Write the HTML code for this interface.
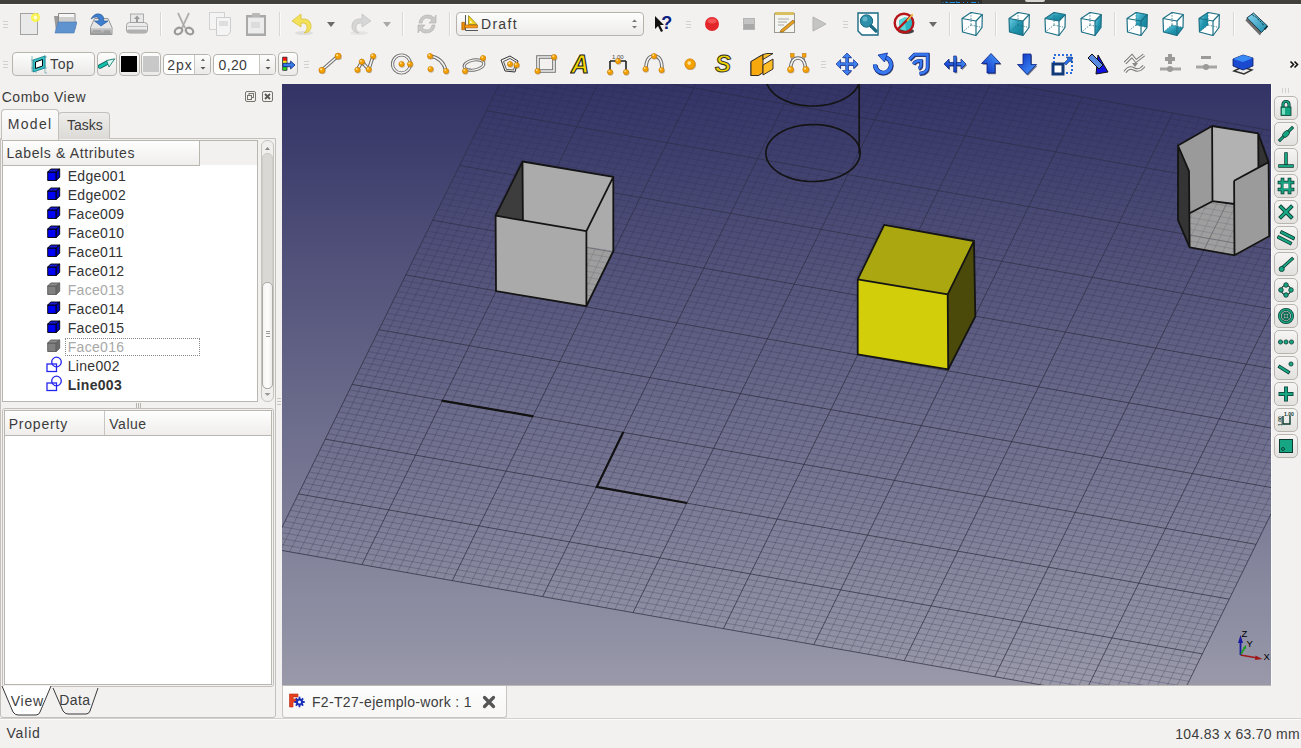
<!DOCTYPE html><html><head><meta charset="utf-8"><style>
*{margin:0;padding:0;box-sizing:border-box}
html,body{width:1301px;height:748px;overflow:hidden;background:#f2f1f0;font-family:"Liberation Sans",sans-serif;color:#3c3c3c}
.a{position:absolute}
.t{position:absolute;white-space:nowrap;line-height:1}
.grip{position:absolute;width:5px;height:8px;border-top:1px solid #cfcdc9;border-bottom:1px solid #cfcdc9}
.grip:after{content:"";position:absolute;left:0;right:0;top:2px;height:2px;border-top:1px solid #cfcdc9}
.sep{position:absolute;width:1px;background:#d8d6d2}
.btn{position:absolute;border:1px solid #b8b5af;border-radius:4px;background:linear-gradient(#fdfdfd,#ebeae8)}
</style></head><body>
<div class="a" style="left:0;top:0;width:1301px;height:4px;background:#42403b"></div>
<div class="a" style="left:0;top:4px;width:1301px;height:1px;background:#fbfbfa"></div>
<div class="a" style="left:941px;top:0;width:41px;height:4px;background:#2e2d2a"></div>
<svg class="a" style="left:941px;top:0" width="41" height="4"><path d="M1.5 2.5H2.5M5 1.5V2.5H7M8.5 2.5H14M15.5 1.5V2.5H19M22 2.5H23M26 2.5H27M30 2.5H35M37 2.5H38" stroke="#1e90e8" stroke-width="1.2"/></svg>
<div class="a" style="left:1025px;top:0;width:20px;height:2px;background:#d8d6d2;border-radius:0 0 3px 3px"></div>
<svg class="a" style="left:3px;top:21px" width="6" height="8"><path d="M0 0.5H5M0 3.5H5M0 6.5H5" stroke="#d3d1cd" stroke-width="1"/></svg>
<svg class="a" style="left:17.0px;top:12.0px" width="24" height="24" viewBox="0 0 24 24"><rect x="3.5" y="1.5" width="17" height="21" fill="#f0f0f0" stroke="#a2a2a2"/><rect x="4" y="2" width="16" height="20" fill="url(#none)" opacity="0"/><rect x="4" y="2" width="16" height="20" fill="#e9e9e9"/><circle cx="18.5" cy="5.5" r="4.6" fill="#fbf53a" opacity="0.85"/><circle cx="18.5" cy="5.5" r="2" fill="#ffffd0"/></svg>
<svg class="a" style="left:53.0px;top:12.0px" width="24" height="24" viewBox="0 0 24 24"><path d="M1 4H6L7 3H11V19H3Z" fill="#9b9b9b"/><path d="M5.5 1.5H22V17H5.5Z" fill="#f6f6f6" stroke="#8a8a8a"/><path d="M6 5H21V10H6Z" fill="#cfcfcf"/><path d="M2 21L5 10H24L21 21Z" fill="#5f93cf" stroke="#4a78b0" stroke-width="0.6"/></svg>
<svg class="a" style="left:89.0px;top:12.0px" width="24" height="24" viewBox="0 0 24 24"><defs><linearGradient id="sv" x1="0" y1="0" x2="0" y2="1"><stop offset="0" stop-color="#d0d0d0"/><stop offset="1" stop-color="#9c9c9c"/></linearGradient></defs><path d="M1.5 15.5L5.5 6.5H19L23 15.5V22.5H1.5Z" fill="#e6e6e6" stroke="#8c8c8c" stroke-width="0.9"/><path d="M2 16H22.5V22H2Z" fill="url(#sv)"/><path d="M4 19H12M16 18V21M18 18V21M20 18V21" stroke="#8a8a8a" stroke-width="0.8"/><path d="M2 7Q6 0 12 2.5Q15.5 4.5 14.5 9H19L12 14L5.5 9H10Q10.5 6 8 5Q5 4.5 2 7Z" fill="#3f7fd0" stroke="#285a9c" stroke-width="0.7"/></svg>
<svg class="a" style="left:125.0px;top:12.0px" width="24" height="24" viewBox="0 0 24 24"><rect x="5.5" y="2" width="13" height="10" fill="#e8e8e8" stroke="#a5a5a5" stroke-width="0.9"/><path d="M12 3.5L15 7H13V10H11V7H9Z" fill="#9a9a9a"/><rect x="1.5" y="10.5" width="21" height="10.5" rx="3" fill="#ececec" stroke="#9a9a9a" stroke-width="0.9"/><path d="M2.5 14.5H21.5" stroke="#bdbdbd"/><rect x="2" y="17.5" width="20" height="3.5" rx="1.5" fill="#b0b0b0"/></svg>
<div class="a" style="left:160px;top:12px;width:1px;height:24px;background:#d9d7d3"></div><div class="a" style="left:161px;top:12px;width:1px;height:24px;background:#fbfbfa"></div>
<svg class="a" style="left:172.0px;top:12.0px" width="24" height="24" viewBox="0 0 24 24"><path d="M6 1L13 16M17 1L10 16" stroke="#c8c8c8" stroke-width="2.2"/><path d="M6 1L13 16M17 1L10 16" stroke="#9a9a9a" stroke-width="0.8" fill="none"/><ellipse cx="6.5" cy="19" rx="4" ry="3" fill="none" stroke="#9a9a9a" stroke-width="2.2" transform="rotate(-30 6.5 19)"/><ellipse cx="17.5" cy="19" rx="4" ry="3" fill="none" stroke="#9a9a9a" stroke-width="2.2" transform="rotate(30 17.5 19)"/></svg>
<svg class="a" style="left:208.0px;top:12.0px" width="24" height="24" viewBox="0 0 24 24"><rect x="1.5" y="0.5" width="15" height="17" fill="#f4f4f4" stroke="#d2d2d2"/><path d="M8.5 5.5H22.5V20L19.5 23.5H8.5Z" fill="#f4f4f4" stroke="#cdcdcd"/><rect x="11" y="9" width="9" height="5" fill="#dedede"/></svg>
<svg class="a" style="left:244.0px;top:12.0px" width="24" height="24" viewBox="0 0 24 24"><rect x="2" y="3" width="20" height="21" fill="#a9a9a9"/><rect x="4" y="5.5" width="16" height="16" fill="#ececec"/><rect x="8" y="1" width="8" height="4" rx="1" fill="#b8b8b8"/><rect x="7" y="10" width="9" height="6" fill="#dcdcdc"/></svg>
<div class="a" style="left:279px;top:12px;width:1px;height:24px;background:#d9d7d3"></div><div class="a" style="left:280px;top:12px;width:1px;height:24px;background:#fbfbfa"></div>
<svg class="a" style="left:290.5px;top:12.0px" width="24" height="24" viewBox="0 0 24 24"><ellipse cx="13" cy="21" rx="9" ry="2" fill="#000" opacity="0.08"/><path d="M10 2L1 9L10 15V11Q17 10 16 17Q15 20 13 21Q21 20 20 13Q19 6 10 7Z" fill="#f4e15a" stroke="#d8c23a" stroke-width="0.8"/></svg>
<svg class="a" style="left:325.0px;top:19.0px" width="12" height="12" viewBox="0 0 12 12"><path d="M2 3H10L6 8Z" fill="#6b6b6b"/></svg>
<svg class="a" style="left:347.5px;top:12.0px" width="24" height="24" viewBox="0 0 24 24"><ellipse cx="11" cy="21" rx="9" ry="2" fill="#000" opacity="0.05"/><path d="M14 2L23 9L14 15V11Q7 10 8 17Q9 20 11 21Q3 20 4 13Q5 6 14 7Z" fill="#d6d6d6" stroke="#c4c4c4" stroke-width="0.8"/></svg>
<svg class="a" style="left:381.0px;top:19.0px" width="12" height="12" viewBox="0 0 12 12"><path d="M2 3H10L6 8Z" fill="#a8a8a8"/></svg>
<div class="a" style="left:402px;top:12px;width:1px;height:24px;background:#d9d7d3"></div><div class="a" style="left:403px;top:12px;width:1px;height:24px;background:#fbfbfa"></div>
<svg class="a" style="left:414.5px;top:12.0px" width="24" height="24" viewBox="0 0 24 24"><path d="M4 11Q5 3 13 3Q17 3 19 6L21 3V11H14L17 8Q15 6 12 6Q8 6 7 11Z" fill="#c9c9c9" stroke="#b0b0b0" stroke-width="0.6"/><path d="M20 13Q19 21 11 21Q7 21 5 18L3 21V13H10L7 16Q9 18 12 18Q16 18 17 13Z" fill="#c9c9c9" stroke="#b0b0b0" stroke-width="0.6"/></svg>
<div class="a" style="left:449px;top:12px;width:1px;height:24px;background:#d9d7d3"></div><div class="a" style="left:450px;top:12px;width:1px;height:24px;background:#fbfbfa"></div>
<div class="a" style="left:456px;top:12px;width:188px;height:24px;border:1px solid #b6b3ad;border-radius:4px;background:linear-gradient(#fefefe,#ecebe9)"></div>
<svg class="a" style="left:459.0px;top:14.0px" width="20" height="20" viewBox="0 0 20 20"><path d="M6.5 1V16.5H19" fill="none" stroke="#555" stroke-width="1"/><path d="M9.5 1.5V10.5H18Z" fill="#f2d41e" stroke="#8a7a10" stroke-width="0.7"/><path d="M11 6V9H13.5Z" fill="#fff8c0"/><path d="M2.8 8.3H5.6V15.7H2.8Z" fill="#f08a00" stroke="#9a5500" stroke-width="0.6"/><path d="M5.6 11H18.5V13.8H5.6Z" fill="#ff9a10" stroke="#9a5500" stroke-width="0.6"/></svg>
<div class="t" style="left:481px;top:17.1px;font-size:14px;letter-spacing:1.3px;color:#3c3c3c">Draft</div>
<svg class="a" style="left:629.5px;top:18.0px" width="9" height="12" viewBox="0 0 9 12"><path d="M2 4L4.5 1.5L7 4Z" fill="#777"/><path d="M2 8L4.5 10.5L7 8Z" fill="#777"/></svg>
<svg class="a" style="left:654.0px;top:15.0px" width="18" height="18" viewBox="0 0 18 18"><path d="M1 1V14L4 11L7 17L9 16L6 10H10Z" fill="#111"/><text x="7.3" y="13.8" font-family="Liberation Sans" font-weight="bold" font-size="18" fill="#0c1f80">?</text></svg>
<svg class="a" style="left:686px;top:21px" width="6" height="8"><path d="M0 0.5H5M0 3.5H5M0 6.5H5" stroke="#d3d1cd" stroke-width="1"/></svg>
<svg class="a" style="left:704.0px;top:16.0px" width="16" height="16" viewBox="0 0 16 16"><circle cx="8" cy="8" r="7" fill="#e3262a"/><ellipse cx="8" cy="5" rx="4.5" ry="2.5" fill="#ff7070" opacity="0.6"/></svg>
<svg class="a" style="left:742.5px;top:17.5px" width="12" height="12" viewBox="0 0 12 12"><rect x="0.5" y="0.5" width="11" height="11" fill="#c4c4c4" stroke="#b5b5b5"/><rect x="1" y="6" width="10" height="5" fill="#a9a9a9"/></svg>
<svg class="a" style="left:772.5px;top:11.0px" width="24" height="24" viewBox="0 0 24 24"><rect x="1.5" y="2.5" width="20" height="19" fill="#f4f4f0" stroke="#9a9a90"/><rect x="2" y="1" width="19" height="3" fill="#d8c060"/><path d="M5 8H16M5 11H14M5 14H11" stroke="#a8a8a8"/><path d="M8 19L20 9L22 11L10 21L7 21Z" fill="#e8a020" stroke="#7a5010" stroke-width="0.6"/></svg>
<svg class="a" style="left:812.0px;top:16.0px" width="16" height="16" viewBox="0 0 16 16"><path d="M1 1L14 8L1 15Z" fill="#c5c5c5" stroke="#b3b3b3"/></svg>
<svg class="a" style="left:843px;top:21px" width="6" height="8"><path d="M0 0.5H5M0 3.5H5M0 6.5H5" stroke="#d3d1cd" stroke-width="1"/></svg>
<svg class="a" style="left:857.0px;top:11.5px" width="24" height="24" viewBox="0 0 24 24"><path d="M1 1H21V23H5L1 19Z" fill="#fff" stroke="#1a6a82" stroke-width="1.4"/><circle cx="9.5" cy="9" r="6.2" fill="#2d8faa" stroke="#1a6a82"/><circle cx="8" cy="7" r="2.5" fill="#7cc4d6" opacity="0.7"/><path d="M14 14L19 19" stroke="#1a6a82" stroke-width="3.2" stroke-linecap="round"/></svg>
<svg class="a" style="left:893.0px;top:12.0px" width="24" height="24" viewBox="0 0 24 24"><ellipse cx="13" cy="19" rx="8" ry="3" fill="#222" opacity="0.85"/><path d="M6 8L12 5L19 7V16L13 19L6 17Z" fill="#5ad6d6"/><path d="M12 8L19 7V16L13 19Z" fill="#2bb4c0"/><circle cx="11" cy="11" r="9.3" fill="none" stroke="#b5161a" stroke-width="2.4"/><path d="M4.5 17.5L19 3" stroke="#b5161a" stroke-width="2.4"/><path d="M14 9L20 2" stroke="#f0d040" stroke-width="1.2"/></svg>
<svg class="a" style="left:927.0px;top:19.0px" width="12" height="12" viewBox="0 0 12 12"><path d="M2 3H10L6 8Z" fill="#6b6b6b"/></svg>
<div class="a" style="left:949px;top:12px;width:1px;height:24px;background:#d9d7d3"></div><div class="a" style="left:950px;top:12px;width:1px;height:24px;background:#fbfbfa"></div>
<svg class="a" style="left:959.5px;top:12.0px" width="24" height="24" viewBox="0 0 24 24"><defs><linearGradient id="cg1" x1="0" y1="0" x2="1" y2="1"><stop offset="0" stop-color="#6cd0e6"/><stop offset="0.55" stop-color="#1f92ab"/><stop offset="1" stop-color="#157f97"/></linearGradient></defs><polygon points="2,6.5 11,0.5 22.3,2.5 22,15.5 16,23.5 2.5,20" fill="#fff"/><path d="M11 0.5V13M11 13L2.5 20M11 13L22 15.5" stroke="#1d6f80" stroke-width="0.8" stroke-dasharray="1.4 1.3" fill="none"/><polygon points="2,6.5 16,9 16,23.5 2.5,20" fill="none" stroke="#1d7085" stroke-width="1.2" stroke-linejoin="round"/><polyline points="2,6.5 11,0.5 22.3,2.5 16,9" fill="none" stroke="#1d7085" stroke-width="1.2" stroke-linejoin="round"/><polyline points="22.3,2.5 22,15.5 16,23.5" fill="none" stroke="#1d7085" stroke-width="1.2" stroke-linejoin="round"/></svg>
<div class="a" style="left:995px;top:12px;width:1px;height:24px;background:#d9d7d3"></div><div class="a" style="left:996px;top:12px;width:1px;height:24px;background:#fbfbfa"></div>
<svg class="a" style="left:1006.5px;top:12.0px" width="24" height="24" viewBox="0 0 24 24"><defs><linearGradient id="cg2" x1="0" y1="0" x2="1" y2="1"><stop offset="0" stop-color="#6cd0e6"/><stop offset="0.55" stop-color="#1f92ab"/><stop offset="1" stop-color="#157f97"/></linearGradient></defs><polygon points="2,6.5 11,0.5 22.3,2.5 22,15.5 16,23.5 2.5,20" fill="#fff"/><polygon points="2,6.5 16,9 16,23.5 2.5,20" fill="url(#cg2)"/><path d="M11 0.5V13M11 13L2.5 20M11 13L22 15.5" stroke="#1d6f80" stroke-width="0.8" stroke-dasharray="1.4 1.3" fill="none"/><polygon points="2,6.5 16,9 16,23.5 2.5,20" fill="none" stroke="#1d7085" stroke-width="1.2" stroke-linejoin="round"/><polyline points="2,6.5 11,0.5 22.3,2.5 16,9" fill="none" stroke="#1d7085" stroke-width="1.2" stroke-linejoin="round"/><polyline points="22.3,2.5 22,15.5 16,23.5" fill="none" stroke="#1d7085" stroke-width="1.2" stroke-linejoin="round"/></svg>
<svg class="a" style="left:1042.5px;top:12.0px" width="24" height="24" viewBox="0 0 24 24"><defs><linearGradient id="cg3" x1="0" y1="0" x2="1" y2="1"><stop offset="0" stop-color="#6cd0e6"/><stop offset="0.55" stop-color="#1f92ab"/><stop offset="1" stop-color="#157f97"/></linearGradient></defs><polygon points="2,6.5 11,0.5 22.3,2.5 22,15.5 16,23.5 2.5,20" fill="#fff"/><polygon points="2,6.5 11,0.5 22.3,2.5 16,9" fill="url(#cg3)"/><path d="M11 0.5V13M11 13L2.5 20M11 13L22 15.5" stroke="#1d6f80" stroke-width="0.8" stroke-dasharray="1.4 1.3" fill="none"/><polygon points="2,6.5 16,9 16,23.5 2.5,20" fill="none" stroke="#1d7085" stroke-width="1.2" stroke-linejoin="round"/><polyline points="2,6.5 11,0.5 22.3,2.5 16,9" fill="none" stroke="#1d7085" stroke-width="1.2" stroke-linejoin="round"/><polyline points="22.3,2.5 22,15.5 16,23.5" fill="none" stroke="#1d7085" stroke-width="1.2" stroke-linejoin="round"/></svg>
<svg class="a" style="left:1078.5px;top:12.0px" width="24" height="24" viewBox="0 0 24 24"><defs><linearGradient id="cg4" x1="0" y1="0" x2="1" y2="1"><stop offset="0" stop-color="#6cd0e6"/><stop offset="0.55" stop-color="#1f92ab"/><stop offset="1" stop-color="#157f97"/></linearGradient></defs><polygon points="2,6.5 11,0.5 22.3,2.5 22,15.5 16,23.5 2.5,20" fill="#fff"/><polygon points="16,9 22.3,2.5 22,15.5 16,23.5" fill="url(#cg4)"/><path d="M11 0.5V13M11 13L2.5 20M11 13L22 15.5" stroke="#1d6f80" stroke-width="0.8" stroke-dasharray="1.4 1.3" fill="none"/><polygon points="2,6.5 16,9 16,23.5 2.5,20" fill="none" stroke="#1d7085" stroke-width="1.2" stroke-linejoin="round"/><polyline points="2,6.5 11,0.5 22.3,2.5 16,9" fill="none" stroke="#1d7085" stroke-width="1.2" stroke-linejoin="round"/><polyline points="22.3,2.5 22,15.5 16,23.5" fill="none" stroke="#1d7085" stroke-width="1.2" stroke-linejoin="round"/></svg>
<div class="a" style="left:1114px;top:12px;width:1px;height:24px;background:#d9d7d3"></div><div class="a" style="left:1115px;top:12px;width:1px;height:24px;background:#fbfbfa"></div>
<svg class="a" style="left:1125.0px;top:12.0px" width="24" height="24" viewBox="0 0 24 24"><defs><linearGradient id="cg5" x1="0" y1="0" x2="1" y2="1"><stop offset="0" stop-color="#6cd0e6"/><stop offset="0.55" stop-color="#1f92ab"/><stop offset="1" stop-color="#157f97"/></linearGradient></defs><polygon points="2,6.5 11,0.5 22.3,2.5 22,15.5 16,23.5 2.5,20" fill="#fff"/><polygon points="11,0.5 22.3,2.5 22,15.5 11,13" fill="url(#cg5)"/><path d="M11 0.5V13M11 13L2.5 20M11 13L22 15.5" stroke="#1d6f80" stroke-width="0.8" stroke-dasharray="1.4 1.3" fill="none"/><polygon points="2,6.5 16,9 16,23.5 2.5,20" fill="none" stroke="#1d7085" stroke-width="1.2" stroke-linejoin="round"/><polyline points="2,6.5 11,0.5 22.3,2.5 16,9" fill="none" stroke="#1d7085" stroke-width="1.2" stroke-linejoin="round"/><polyline points="22.3,2.5 22,15.5 16,23.5" fill="none" stroke="#1d7085" stroke-width="1.2" stroke-linejoin="round"/></svg>
<svg class="a" style="left:1161.0px;top:12.0px" width="24" height="24" viewBox="0 0 24 24"><defs><linearGradient id="cg6" x1="0" y1="0" x2="1" y2="1"><stop offset="0" stop-color="#6cd0e6"/><stop offset="0.55" stop-color="#1f92ab"/><stop offset="1" stop-color="#157f97"/></linearGradient></defs><polygon points="2,6.5 11,0.5 22.3,2.5 22,15.5 16,23.5 2.5,20" fill="#fff"/><polygon points="2.5,20 11,13 22,15.5 16,23.5" fill="url(#cg6)"/><path d="M11 0.5V13M11 13L2.5 20M11 13L22 15.5" stroke="#1d6f80" stroke-width="0.8" stroke-dasharray="1.4 1.3" fill="none"/><polygon points="2,6.5 16,9 16,23.5 2.5,20" fill="none" stroke="#1d7085" stroke-width="1.2" stroke-linejoin="round"/><polyline points="2,6.5 11,0.5 22.3,2.5 16,9" fill="none" stroke="#1d7085" stroke-width="1.2" stroke-linejoin="round"/><polyline points="22.3,2.5 22,15.5 16,23.5" fill="none" stroke="#1d7085" stroke-width="1.2" stroke-linejoin="round"/></svg>
<svg class="a" style="left:1197.0px;top:12.0px" width="24" height="24" viewBox="0 0 24 24"><defs><linearGradient id="cg7" x1="0" y1="0" x2="1" y2="1"><stop offset="0" stop-color="#6cd0e6"/><stop offset="0.55" stop-color="#1f92ab"/><stop offset="1" stop-color="#157f97"/></linearGradient></defs><polygon points="2,6.5 11,0.5 22.3,2.5 22,15.5 16,23.5 2.5,20" fill="#fff"/><polygon points="2,6.5 11,0.5 11,13 2.5,20" fill="url(#cg7)"/><path d="M11 0.5V13M11 13L2.5 20M11 13L22 15.5" stroke="#1d6f80" stroke-width="0.8" stroke-dasharray="1.4 1.3" fill="none"/><polygon points="2,6.5 16,9 16,23.5 2.5,20" fill="none" stroke="#1d7085" stroke-width="1.2" stroke-linejoin="round"/><polyline points="2,6.5 11,0.5 22.3,2.5 16,9" fill="none" stroke="#1d7085" stroke-width="1.2" stroke-linejoin="round"/><polyline points="22.3,2.5 22,15.5 16,23.5" fill="none" stroke="#1d7085" stroke-width="1.2" stroke-linejoin="round"/></svg>
<div class="a" style="left:1233px;top:12px;width:1px;height:24px;background:#d9d7d3"></div><div class="a" style="left:1234px;top:12px;width:1px;height:24px;background:#fbfbfa"></div>
<svg class="a" style="left:1244.0px;top:12.0px" width="24" height="24" viewBox="0 0 24 24"><defs><linearGradient id="msr" x1="0" y1="0" x2="1" y2="1"><stop offset="0" stop-color="#8ad8f5"/><stop offset="1" stop-color="#1a8aa8"/></linearGradient></defs><path d="M1.5 8.5L3 5.8L17.5 20.5L16 23.5Z" fill="#555" opacity="0.85"/><path d="M3 5.8L9.5 1L23.5 14L17.5 20.5Z" fill="url(#msr)" stroke="#0e2f3a" stroke-width="0.9"/><path d="M8.5 2.5L10 4.5M11.5 4.5L12.5 5.8M13.5 6.5L15 8.5M16 9L17 10.3M18 11.3L19.5 13.3" stroke="#0e2f3a" stroke-width="1"/><path d="M20.5 17.5L23.5 14" stroke="#0e2f3a" stroke-width="1.6"/></svg>
<svg class="a" width="0" height="0" style="left:0;top:0"><defs><linearGradient id="bgr" x1="1" y1="0" x2="0" y2="1"><stop offset="0" stop-color="#4aa0ff"/><stop offset="1" stop-color="#0a2ac0"/></linearGradient><linearGradient id="bgr2" x1="0" y1="0" x2="1" y2="1"><stop offset="0" stop-color="#0a2ac0"/><stop offset="1" stop-color="#4aa0ff"/></linearGradient></defs></svg>
<svg class="a" style="left:3px;top:61px" width="6" height="8"><path d="M0 0.5H5M0 3.5H5M0 6.5H5" stroke="#d3d1cd" stroke-width="1"/></svg>
<div class="btn" style="left:12px;top:52px;width:83px;height:24px"></div>
<svg class="a" style="left:31.0px;top:54.5px" width="17" height="19" viewBox="0 0 17 19"><path d="M1 1V17M14 0V16M0 5H2M13 2H16M0 13H2M13 13H16M5 16V18M14 16V18L16 18" stroke="#4a9aa0" stroke-width="0.6" fill="none"/><path d="M2 5L14 1V13L2 17Z" fill="#35c4cc" stroke="#167a82" stroke-width="0.8"/><path d="M4.5 7L11.5 4.5V11L4.5 13.5Z" fill="#fff" stroke="#000" stroke-width="1"/></svg>
<div class="t" style="left:50.1px;top:56.8px;font-size:14px;letter-spacing:0.6px;color:#3c3c3c">Top</div>
<div class="btn" style="left:97px;top:52px;width:20px;height:24px"></div>
<svg class="a" style="left:98.0px;top:55.0px" width="18" height="18" viewBox="0 0 18 18"><path d="M2 11.5L9.5 7.5" stroke="#0a5a50" stroke-width="4.4" stroke-linecap="round"/><path d="M2 11.5L9.5 7.5" stroke="#12c0ae" stroke-width="3" stroke-linecap="round"/><path d="M8.5 5.5L16.8 3.8L11 12Z" fill="#d6f7f0" stroke="#1a7a70" stroke-width="0.9" stroke-linejoin="round"/></svg>
<div class="btn" style="left:119px;top:52px;width:21px;height:24px"></div>
<div class="a" style="left:121px;top:56px;width:16px;height:16px;background:#000"></div>
<div class="btn" style="left:141px;top:52px;width:20px;height:24px"></div>
<div class="a" style="left:143px;top:56px;width:16px;height:16px;background:#c8c8c8"></div>
<div class="a" style="left:163px;top:54px;width:48px;height:21px;border:1px solid #b6b3ad;border-radius:4px;background:#fff"></div>
<div class="a" style="left:194px;top:55px;width:16px;height:19px;border-left:1px solid #c9c6c1;border-radius:0 3px 3px 0;background:linear-gradient(#fcfcfc,#ebeae8)"></div>
<svg class="a" style="left:198.5px;top:57.0px" width="8" height="14" viewBox="0 0 8 14"><path d="M2 4L4 1.5L6 4Z" fill="#666"/><path d="M1.5 10H6.5L4 12.5Z" fill="#555"/></svg>
<div class="t" style="left:167.2px;top:58.2px;font-size:14px;letter-spacing:1px;color:#3c3c3c">2px</div>
<div class="a" style="left:213px;top:54px;width:63px;height:21px;border:1px solid #b6b3ad;border-radius:4px;background:#fff"></div>
<div class="a" style="left:259px;top:55px;width:16px;height:19px;border-left:1px solid #c9c6c1;border-radius:0 3px 3px 0;background:linear-gradient(#fcfcfc,#ebeae8)"></div>
<svg class="a" style="left:263.5px;top:57.0px" width="8" height="14" viewBox="0 0 8 14"><path d="M2 4L4 1.5L6 4Z" fill="#666"/><path d="M1.5 10H6.5L4 12.5Z" fill="#555"/></svg>
<div class="t" style="left:218.5px;top:58.2px;font-size:14px;letter-spacing:0.37px;color:#3c3c3c">0,20</div>
<div class="btn" style="left:278px;top:52px;width:20px;height:24px"></div>
<svg class="a" style="left:279.0px;top:55.0px" width="18" height="18" viewBox="0 0 18 18"><rect x="3.2" y="1.7" width="5.2" height="14" rx="0.8" fill="#333"/><rect x="4" y="2.5" width="3.6" height="3.2" fill="#ff1010"/><rect x="4" y="5.7" width="3.6" height="3.2" fill="#f5f010"/><rect x="4" y="8.9" width="3.6" height="3.2" fill="#2020e0"/><rect x="4" y="12.1" width="3.6" height="2.8" fill="#20e020"/><path d="M4 8.3H11.6V6L16 10L11.6 14V11.7H4Z" fill="#3a7ae8" stroke="#0a2a7a" stroke-width="0.8" stroke-linejoin="round"/></svg>
<svg class="a" style="left:304px;top:61px" width="6" height="8"><path d="M0 0.5H5M0 3.5H5M0 6.5H5" stroke="#d3d1cd" stroke-width="1"/></svg>
<svg class="a" style="left:318.0px;top:52.0px" width="24" height="24" viewBox="0 0 24 24"><path d="M4 18L20 4" fill="none" stroke="#6e6e6e" stroke-width="3.6"/><path d="M4 18L20 4" fill="none" stroke="#f5f5f5" stroke-width="1.6"/><circle cx="3.9" cy="18.2" r="3.3" fill="#7a4a00" opacity="0.35" transform="translate(0.6,0.8)"/><circle cx="3.9" cy="18.2" r="3" fill="#f5a100" stroke="#c77800" stroke-width="0.6"/><circle cx="3.0999999999999996" cy="17.3" r="1.0499999999999998" fill="#ffe6a0"/><circle cx="20" cy="4.1" r="3.3" fill="#7a4a00" opacity="0.35" transform="translate(0.6,0.8)"/><circle cx="20" cy="4.1" r="3" fill="#f5a100" stroke="#c77800" stroke-width="0.6"/><circle cx="19.2" cy="3.1999999999999997" r="1.0499999999999998" fill="#ffe6a0"/></svg>
<svg class="a" style="left:354.0px;top:52.0px" width="24" height="24" viewBox="0 0 24 24"><path d="M3.4 17.8L7.8 9.7L14.7 17.4L19.1 4.1" fill="none" stroke="#6e6e6e" stroke-width="3.6"/><path d="M3.4 17.8L7.8 9.7L14.7 17.4L19.1 4.1" fill="none" stroke="#f5f5f5" stroke-width="1.6"/><circle cx="3.4" cy="17.8" r="2.9" fill="#7a4a00" opacity="0.35" transform="translate(0.6,0.8)"/><circle cx="3.4" cy="17.8" r="2.6" fill="#f5a100" stroke="#c77800" stroke-width="0.6"/><circle cx="2.5999999999999996" cy="16.900000000000002" r="0.9099999999999999" fill="#ffe6a0"/><circle cx="7.8" cy="9.7" r="2.9" fill="#7a4a00" opacity="0.35" transform="translate(0.6,0.8)"/><circle cx="7.8" cy="9.7" r="2.6" fill="#f5a100" stroke="#c77800" stroke-width="0.6"/><circle cx="7.0" cy="8.799999999999999" r="0.9099999999999999" fill="#ffe6a0"/><circle cx="14.7" cy="17.4" r="2.9" fill="#7a4a00" opacity="0.35" transform="translate(0.6,0.8)"/><circle cx="14.7" cy="17.4" r="2.6" fill="#f5a100" stroke="#c77800" stroke-width="0.6"/><circle cx="13.899999999999999" cy="16.5" r="0.9099999999999999" fill="#ffe6a0"/><circle cx="19.1" cy="4.1" r="2.9" fill="#7a4a00" opacity="0.35" transform="translate(0.6,0.8)"/><circle cx="19.1" cy="4.1" r="2.6" fill="#f5a100" stroke="#c77800" stroke-width="0.6"/><circle cx="18.3" cy="3.1999999999999997" r="0.9099999999999999" fill="#ffe6a0"/></svg>
<svg class="a" style="left:390.0px;top:52.0px" width="24" height="24" viewBox="0 0 24 24"><circle cx="11.5" cy="12" r="9" fill="none" stroke="#6e6e6e" stroke-width="3.2"/><circle cx="11.5" cy="12" r="9" fill="none" stroke="#f5f5f5" stroke-width="1.4"/><circle cx="11.5" cy="12" r="2.9" fill="#7a4a00" opacity="0.35" transform="translate(0.6,0.8)"/><circle cx="11.5" cy="12" r="2.6" fill="#f5a100" stroke="#c77800" stroke-width="0.6"/><circle cx="10.7" cy="11.1" r="0.9099999999999999" fill="#ffe6a0"/><circle cx="20" cy="12" r="2.9" fill="#7a4a00" opacity="0.35" transform="translate(0.6,0.8)"/><circle cx="20" cy="12" r="2.6" fill="#f5a100" stroke="#c77800" stroke-width="0.6"/><circle cx="19.2" cy="11.1" r="0.9099999999999999" fill="#ffe6a0"/></svg>
<svg class="a" style="left:426.0px;top:52.0px" width="24" height="24" viewBox="0 0 24 24"><path d="M4 4Q17 6 20 19" fill="none" stroke="#6e6e6e" stroke-width="3.6"/><path d="M4 4Q17 6 20 19" fill="none" stroke="#f5f5f5" stroke-width="1.6"/><circle cx="4" cy="4" r="2.9" fill="#7a4a00" opacity="0.35" transform="translate(0.6,0.8)"/><circle cx="4" cy="4" r="2.6" fill="#f5a100" stroke="#c77800" stroke-width="0.6"/><circle cx="3.2" cy="3.1" r="0.9099999999999999" fill="#ffe6a0"/><circle cx="4.5" cy="17" r="2.9" fill="#7a4a00" opacity="0.35" transform="translate(0.6,0.8)"/><circle cx="4.5" cy="17" r="2.6" fill="#f5a100" stroke="#c77800" stroke-width="0.6"/><circle cx="3.7" cy="16.1" r="0.9099999999999999" fill="#ffe6a0"/><circle cx="20" cy="19" r="2.9" fill="#7a4a00" opacity="0.35" transform="translate(0.6,0.8)"/><circle cx="20" cy="19" r="2.6" fill="#f5a100" stroke="#c77800" stroke-width="0.6"/><circle cx="19.2" cy="18.1" r="0.9099999999999999" fill="#ffe6a0"/></svg>
<svg class="a" style="left:462.0px;top:52.0px" width="24" height="24" viewBox="0 0 24 24"><ellipse cx="12" cy="13" rx="10" ry="5" fill="none" stroke="#6e6e6e" stroke-width="3" transform="rotate(-10 12 13)"/><ellipse cx="12" cy="13" rx="10" ry="5" fill="none" stroke="#f5f5f5" stroke-width="1.2" transform="rotate(-10 12 13)"/><circle cx="3" cy="19" r="2.9" fill="#7a4a00" opacity="0.35" transform="translate(0.6,0.8)"/><circle cx="3" cy="19" r="2.6" fill="#f5a100" stroke="#c77800" stroke-width="0.6"/><circle cx="2.2" cy="18.1" r="0.9099999999999999" fill="#ffe6a0"/><circle cx="21" cy="6" r="2.9" fill="#7a4a00" opacity="0.35" transform="translate(0.6,0.8)"/><circle cx="21" cy="6" r="2.6" fill="#f5a100" stroke="#c77800" stroke-width="0.6"/><circle cx="20.2" cy="5.1" r="0.9099999999999999" fill="#ffe6a0"/></svg>
<svg class="a" style="left:498.0px;top:52.0px" width="24" height="24" viewBox="0 0 24 24"><path d="M3 8L12 4L20 9L17 20L7 19Z" fill="none" stroke="#333" stroke-width="1"/><path d="M5.5 9.5L12 6.5L18 10L15.5 18L8.5 17.5Z" fill="none" stroke="#555" stroke-width="1"/><circle cx="12" cy="12" r="2.9" fill="#7a4a00" opacity="0.35" transform="translate(0.6,0.8)"/><circle cx="12" cy="12" r="2.6" fill="#f5a100" stroke="#c77800" stroke-width="0.6"/><circle cx="11.2" cy="11.1" r="0.9099999999999999" fill="#ffe6a0"/><circle cx="18.5" cy="13" r="2.9" fill="#7a4a00" opacity="0.35" transform="translate(0.6,0.8)"/><circle cx="18.5" cy="13" r="2.6" fill="#f5a100" stroke="#c77800" stroke-width="0.6"/><circle cx="17.7" cy="12.1" r="0.9099999999999999" fill="#ffe6a0"/></svg>
<svg class="a" style="left:534.0px;top:52.0px" width="24" height="24" viewBox="0 0 24 24"><path d="M4 5H20V19H4Z" fill="none" stroke="#6e6e6e" stroke-width="3.6"/><path d="M4 5H20V19H4Z" fill="none" stroke="#f5f5f5" stroke-width="1.6"/><circle cx="3.5" cy="19" r="2.9" fill="#7a4a00" opacity="0.35" transform="translate(0.6,0.8)"/><circle cx="3.5" cy="19" r="2.6" fill="#f5a100" stroke="#c77800" stroke-width="0.6"/><circle cx="2.7" cy="18.1" r="0.9099999999999999" fill="#ffe6a0"/><circle cx="20" cy="5" r="2.9" fill="#7a4a00" opacity="0.35" transform="translate(0.6,0.8)"/><circle cx="20" cy="5" r="2.6" fill="#f5a100" stroke="#c77800" stroke-width="0.6"/><circle cx="19.2" cy="4.1" r="0.9099999999999999" fill="#ffe6a0"/></svg>
<svg class="a" style="left:570.0px;top:52.0px" width="24" height="24" viewBox="0 0 24 24"><text x="1" y="21" font-family="Liberation Sans" font-weight="bold" font-style="italic" font-size="25" fill="#f5d800" stroke="#1a1a1a" stroke-width="1.1">A</text></svg>
<svg class="a" style="left:606.0px;top:52.0px" width="24" height="24" viewBox="0 0 24 24"><path d="M4 9V20M20 9V20M4 9H20" stroke="#222" stroke-width="1.6" fill="none"/><text x="6" y="7" font-family="Liberation Sans" font-size="6" fill="#444">1.00</text><circle cx="4" cy="20" r="2.9" fill="#7a4a00" opacity="0.35" transform="translate(0.6,0.8)"/><circle cx="4" cy="20" r="2.6" fill="#f5a100" stroke="#c77800" stroke-width="0.6"/><circle cx="3.2" cy="19.1" r="0.9099999999999999" fill="#ffe6a0"/><circle cx="20" cy="20" r="2.9" fill="#7a4a00" opacity="0.35" transform="translate(0.6,0.8)"/><circle cx="20" cy="20" r="2.6" fill="#f5a100" stroke="#c77800" stroke-width="0.6"/><circle cx="19.2" cy="19.1" r="0.9099999999999999" fill="#ffe6a0"/><circle cx="12" cy="9" r="2.9" fill="#7a4a00" opacity="0.35" transform="translate(0.6,0.8)"/><circle cx="12" cy="9" r="2.6" fill="#f5a100" stroke="#c77800" stroke-width="0.6"/><circle cx="11.2" cy="8.1" r="0.9099999999999999" fill="#ffe6a0"/></svg>
<svg class="a" style="left:642.0px;top:52.0px" width="24" height="24" viewBox="0 0 24 24"><path d="M4 17Q4 4 12 4Q20 4 20 17" fill="none" stroke="#6e6e6e" stroke-width="3.6"/><path d="M4 17Q4 4 12 4Q20 4 20 17" fill="none" stroke="#f5f5f5" stroke-width="1.6"/><circle cx="3.5" cy="17" r="2.9" fill="#7a4a00" opacity="0.35" transform="translate(0.6,0.8)"/><circle cx="3.5" cy="17" r="2.6" fill="#f5a100" stroke="#c77800" stroke-width="0.6"/><circle cx="2.7" cy="16.1" r="0.9099999999999999" fill="#ffe6a0"/><circle cx="12" cy="4" r="2.9" fill="#7a4a00" opacity="0.35" transform="translate(0.6,0.8)"/><circle cx="12" cy="4" r="2.6" fill="#f5a100" stroke="#c77800" stroke-width="0.6"/><circle cx="11.2" cy="3.1" r="0.9099999999999999" fill="#ffe6a0"/><circle cx="19.5" cy="18" r="2.9" fill="#7a4a00" opacity="0.35" transform="translate(0.6,0.8)"/><circle cx="19.5" cy="18" r="2.6" fill="#f5a100" stroke="#c77800" stroke-width="0.6"/><circle cx="18.7" cy="17.1" r="0.9099999999999999" fill="#ffe6a0"/></svg>
<svg class="a" style="left:684.0px;top:58.0px" width="12" height="12" viewBox="0 0 12 12"><circle cx="6" cy="6" r="5.5" fill="#7a4a00" opacity="0.35" transform="translate(0.6,0.8)"/><circle cx="6" cy="6" r="5.2" fill="#f5a100" stroke="#c77800" stroke-width="0.6"/><circle cx="5.2" cy="5.1" r="1.8199999999999998" fill="#ffe6a0"/></svg>
<svg class="a" style="left:714.0px;top:52.0px" width="22" height="24" viewBox="0 0 22 24"><text x="1" y="20" font-family="Liberation Sans" font-weight="bold" font-style="italic" font-size="24" fill="#ecd200" stroke="#2a2a2a" stroke-width="0.9">S</text></svg>
<svg class="a" style="left:750.0px;top:52.0px" width="24" height="24" viewBox="0 0 24 24"><path d="M0 10L12 2.5V22L7 25H0Z" fill="#333" opacity="0.55" transform="translate(-0.8,0.3)"/><path d="M1 9.5L13 2.5V20.5L8.5 23.5H1Z" fill="#f7a80d" stroke="#222" stroke-width="0.9"/><path d="M13 2.5L17 1.5H23L13 7.5Z" fill="#ffc12e" stroke="#222" stroke-width="0.9"/><path d="M13 13L23 7V17L13 23Z" fill="#ffbd2a" stroke="#222" stroke-width="0.9"/></svg>
<svg class="a" style="left:786.0px;top:52.0px" width="24" height="24" viewBox="0 0 24 24"><path d="M6 4L4.5 17M18 4L19.5 17" stroke="#555" stroke-width="0.7"/><path d="M4.5 17Q5 6 12 6Q19 6 19.5 17" fill="none" stroke="#6e6e6e" stroke-width="3.6"/><path d="M4.5 17Q5 6 12 6Q19 6 19.5 17" fill="none" stroke="#f5f5f5" stroke-width="1.6"/><circle cx="4.5" cy="17.5" r="3.3" fill="#7a4a00" opacity="0.35" transform="translate(0.6,0.8)"/><circle cx="4.5" cy="17.5" r="3" fill="#f5a100" stroke="#c77800" stroke-width="0.6"/><circle cx="3.7" cy="16.6" r="1.0499999999999998" fill="#ffe6a0"/><circle cx="19.8" cy="17.5" r="3.3" fill="#7a4a00" opacity="0.35" transform="translate(0.6,0.8)"/><circle cx="19.8" cy="17.5" r="3" fill="#f5a100" stroke="#c77800" stroke-width="0.6"/><circle cx="19.0" cy="16.6" r="1.0499999999999998" fill="#ffe6a0"/><rect x="4.5" y="1.5" width="3.6" height="3.6" fill="#f5a100" stroke="#b67000" stroke-width="0.5"/><rect x="16.4" y="1.5" width="3.6" height="3.6" fill="#f5a100" stroke="#b67000" stroke-width="0.5"/></svg>
<svg class="a" style="left:821px;top:61px" width="6" height="8"><path d="M0 0.5H5M0 3.5H5M0 6.5H5" stroke="#d3d1cd" stroke-width="1"/></svg>
<svg class="a" style="left:835.0px;top:52.0px" width="24" height="24" viewBox="0 0 24 24"><path d="M12 1L16.5 5.5H13.3V10.7H18.5V7.5L23 12L18.5 16.5V13.3H13.3V18.5H16.5L12 23L7.5 18.5H10.7V13.3H5.5V16.5L1 12L5.5 7.5V10.7H10.7V5.5H7.5Z" fill="#101a40" opacity="0.7" transform="translate(0.6,0.8)"/><path d="M12 1L16.5 5.5H13.3V10.7H18.5V7.5L23 12L18.5 16.5V13.3H13.3V18.5H16.5L12 23L7.5 18.5H10.7V13.3H5.5V16.5L1 12L5.5 7.5V10.7H10.7V5.5H7.5Z" fill="#3f7fef" stroke="#1a3a9a" stroke-width="0.7"/></svg>
<svg class="a" style="left:871.0px;top:52.0px" width="24" height="24" viewBox="0 0 24 24"><path d="M4 12.5A8 8 0 1 0 12.5 4.8" fill="none" stroke="#101a40" stroke-width="4.6" transform="translate(0.5,0.7)" opacity="0.8"/><path d="M4 12.5A8 8 0 1 0 12.5 4.8" fill="none" stroke="#0a2a9a" stroke-width="4.2"/><path d="M4 12.5A8 8 0 1 0 12.5 4.8" fill="none" stroke="#3a7af0" stroke-width="3.2"/><path d="M7 3L16.5 1L13.5 10Z" fill="#3a7af0" stroke="#0a2a9a" stroke-width="0.8"/></svg>
<svg class="a" style="left:907.0px;top:52.0px" width="24" height="24" viewBox="0 0 24 24"><path d="M2.5 7.5L7.5 2.5H20.5V15Q20.5 21 12.5 21.5" fill="none" stroke="#101a40" stroke-width="3.8" transform="translate(0.5,0.7)" opacity="0.8"/><path d="M2.5 7.5L7.5 2.5H20.5V15Q20.5 21 12.5 21.5" fill="none" stroke="#0a2a9a" stroke-width="3.4"/><path d="M2.5 7.5L7.5 2.5H20.5V15Q20.5 21 12.5 21.5" fill="none" stroke="#3a7af0" stroke-width="2.4"/><path d="M6.5 12Q8 8.8 12 8.8H14V12.5Q14 15.5 11.5 16.3" fill="none" stroke="#101a40" stroke-width="3.6" transform="translate(0.5,0.7)" opacity="0.8"/><path d="M6.5 12Q8 8.8 12 8.8H14V12.5Q14 15.5 11.5 16.3" fill="none" stroke="#0a2a9a" stroke-width="3.2"/><path d="M6.5 12Q8 8.8 12 8.8H14V12.5Q14 15.5 11.5 16.3" fill="none" stroke="#3a7af0" stroke-width="2.2"/></svg>
<svg class="a" style="left:943.0px;top:52.0px" width="24" height="24" viewBox="0 0 24 24"><path d="M1 12L6 7V10.5H10.6V13.5H6V17ZM23 12L18 7V10.5H13.4V13.5H18V17ZM10.7 4H13.3V20H10.7Z" fill="#111a33" opacity="0.55" transform="translate(1,1.2)"/><path d="M1 12L6 7V10.5H10.6V13.5H6V17ZM23 12L18 7V10.5H13.4V13.5H18V17ZM10.7 4H13.3V20H10.7Z" fill="url(#bgr)" stroke="#0a1f80" stroke-width="0.7"/></svg>
<svg class="a" style="left:979.0px;top:52.0px" width="24" height="24" viewBox="0 0 24 24"><path d="M12 1.5L21.5 11.5H16V21H8V11.5H2.5Z" fill="#111a33" opacity="0.55" transform="translate(1,1.2)"/><path d="M12 1.5L21.5 11.5H16V21H8V11.5H2.5Z" fill="url(#bgr)" stroke="#0a1f80" stroke-width="0.8"/></svg>
<svg class="a" style="left:1015.0px;top:52.0px" width="24" height="24" viewBox="0 0 24 24"><path d="M12 22.5L21.5 12.5H16V2H8V12.5H2.5Z" fill="#111a33" opacity="0.55" transform="translate(1,1.2)"/><path d="M12 22.5L21.5 12.5H16V2H8V12.5H2.5Z" fill="url(#bgr2)" stroke="#0a1f80" stroke-width="0.8"/></svg>
<svg class="a" style="left:1051.0px;top:52.0px" width="24" height="24" viewBox="0 0 24 24"><rect x="3" y="3" width="18" height="18" fill="none" stroke="#2a6ee0" stroke-width="2" stroke-dasharray="2 2"/><rect x="2" y="12" width="10" height="10" fill="#fff" stroke="#123a7a" stroke-width="3"/><path d="M13 11L17 7L15 5H21V11L19 9L15 13Z" fill="#2a6ee0" stroke="#123a7a" stroke-width="0.6"/></svg>
<svg class="a" style="left:1086.0px;top:52.0px" width="24" height="24" viewBox="0 0 24 24"><path d="M12 3L22 20L10 22Z" fill="#1010e0" stroke="#111" stroke-width="1"/><path d="M2 6L6 2L17 13L13 17Z" fill="#5a8ae0" stroke="#111" stroke-width="1"/></svg>
<svg class="a" style="left:1122.5px;top:52.0px" width="24" height="24" viewBox="0 0 24 24"><path d="M2 11L9 4L13 9L21 3" fill="none" stroke="#777" stroke-width="3.4"/><path d="M2 11L9 4L13 9L21 3" fill="none" stroke="#f5f5f5" stroke-width="1.4"/><path d="M2 20Q6 14 11 17Q16 20 21 14" fill="none" stroke="#777" stroke-width="3.4"/><path d="M2 20Q6 14 11 17Q16 20 21 14" fill="none" stroke="#f5f5f5" stroke-width="1.4"/><path d="M9 11L15 11L12 15Z" fill="#888"/></svg>
<svg class="a" style="left:1159.0px;top:52.0px" width="24" height="24" viewBox="0 0 24 24"><path d="M9 2H13V5H16V9H13V12H9V9H6V5H9Z" fill="#9a9a9a"/><path d="M1 17H22" stroke="#a5a5a5" stroke-width="3"/><circle cx="11" cy="17" r="3" fill="#9a9a9a"/></svg>
<svg class="a" style="left:1195.0px;top:52.0px" width="24" height="24" viewBox="0 0 24 24"><rect x="6" y="4" width="10" height="3" fill="#9a9a9a"/><path d="M1 15H22" stroke="#a5a5a5" stroke-width="3"/><circle cx="11" cy="15" r="3" fill="#9a9a9a"/></svg>
<svg class="a" style="left:1230.5px;top:52.0px" width="24" height="24" viewBox="0 0 24 24"><path d="M3 19L11 15L21 18L13 22Z" fill="#eee" stroke="#333" stroke-width="1.4"/><path d="M2 7L12 3L22 6V14L12 18L2 14Z" fill="#1a4ad0" stroke="#0a1a60" stroke-width="0.8"/><path d="M2 7L12 3L22 6L12 10Z" fill="#3a8af5"/></svg>
<svg class="a" style="left:1289px;top:60px" width="10" height="9"><path d="M1.5 1.5L4.5 4.5L1.5 7.5M5.5 1.5L8.5 4.5L5.5 7.5" fill="none" stroke="#111" stroke-width="1.6"/></svg>
<div class="t" style="left:1.7px;top:90.2px;font-size:14px;letter-spacing:0.54px">Combo View</div>
<svg class="a" style="left:245px;top:91px" width="11" height="11"><rect x="0.5" y="0.5" width="10" height="10" rx="1.5" fill="none" stroke="#77746e"/><rect x="4" y="2.5" width="4.5" height="4" fill="none" stroke="#77746e"/><rect x="2.5" y="4.5" width="4" height="4" fill="#f2f1f0" stroke="#77746e"/></svg>
<svg class="a" style="left:262px;top:91px" width="11" height="11"><rect x="0.5" y="0.5" width="10" height="10" rx="1.5" fill="none" stroke="#77746e"/><path d="M3 3L8 8M8 3L3 8" stroke="#5a5854" stroke-width="1.8"/></svg>
<div class="a" style="left:0;top:138px;width:276px;height:580px;border:1px solid #c3c0bb;border-radius:0 0 3px 3px;background:#f2f1f0"></div>
<div class="a" style="left:58px;top:112px;width:52px;height:27px;border:1px solid #c3c0bb;border-bottom:none;border-radius:4px 4px 0 0;background:linear-gradient(#eeedeb,#dcdad6)"></div>
<div class="a" style="left:1px;top:109px;width:58px;height:31px;border:1px solid #c3c0bb;border-bottom:none;border-radius:4px 4px 0 0;background:linear-gradient(#fbfbfb,#f3f2f1)"></div>
<div class="t" style="left:7.7px;top:116.5px;font-size:14px;letter-spacing:1.32px">Model</div>
<div class="t" style="left:67px;top:117.6px;font-size:14px">Tasks</div>
<div class="a" style="left:2px;top:140px;width:256px;height:262px;border:1px solid #b9b6b0;background:#fff"></div>
<div class="a" style="left:3px;top:141px;width:254px;height:25px;background:#f2f1f0;border-bottom:1px solid #fff"></div>
<div class="a" style="left:3px;top:141px;width:197px;height:25px;background:linear-gradient(#fefefe,#efeeec);border-right:1px solid #b9b6b0;border-bottom:1px solid #b9b6b0"></div>
<div class="t" style="left:6.4px;top:146.1px;font-size:14px;letter-spacing:0.63px">Labels &amp; Attributes</div>
<svg class="a" style="left:47px;top:168px" width="14" height="14" viewBox="0 0 14 14"><path d="M0.7 4H9.2V12.5H0.7Z" fill="#0000f5" stroke="#000" stroke-width="0.9"/><path d="M0.7 4L3.7 1H12.7L9.2 4Z" fill="#1a1ad8" stroke="#000" stroke-width="0.9" stroke-linejoin="round"/><path d="M9.2 4L12.7 1V9.3L9.2 12.5Z" fill="#0000c0" stroke="#000" stroke-width="0.9" stroke-linejoin="round"/></svg>
<div class="t" style="left:67.7px;top:168.7px;font-size:14px;letter-spacing:0.32px;color:#333;font-weight:normal">Edge001</div>
<svg class="a" style="left:47px;top:187px" width="14" height="14" viewBox="0 0 14 14"><path d="M0.7 4H9.2V12.5H0.7Z" fill="#0000f5" stroke="#000" stroke-width="0.9"/><path d="M0.7 4L3.7 1H12.7L9.2 4Z" fill="#1a1ad8" stroke="#000" stroke-width="0.9" stroke-linejoin="round"/><path d="M9.2 4L12.7 1V9.3L9.2 12.5Z" fill="#0000c0" stroke="#000" stroke-width="0.9" stroke-linejoin="round"/></svg>
<div class="t" style="left:67.7px;top:187.7px;font-size:14px;letter-spacing:0.32px;color:#333;font-weight:normal">Edge002</div>
<svg class="a" style="left:47px;top:206px" width="14" height="14" viewBox="0 0 14 14"><path d="M0.7 4H9.2V12.5H0.7Z" fill="#0000f5" stroke="#000" stroke-width="0.9"/><path d="M0.7 4L3.7 1H12.7L9.2 4Z" fill="#1a1ad8" stroke="#000" stroke-width="0.9" stroke-linejoin="round"/><path d="M9.2 4L12.7 1V9.3L9.2 12.5Z" fill="#0000c0" stroke="#000" stroke-width="0.9" stroke-linejoin="round"/></svg>
<div class="t" style="left:67.7px;top:206.7px;font-size:14px;letter-spacing:0.32px;color:#333;font-weight:normal">Face009</div>
<svg class="a" style="left:47px;top:225px" width="14" height="14" viewBox="0 0 14 14"><path d="M0.7 4H9.2V12.5H0.7Z" fill="#0000f5" stroke="#000" stroke-width="0.9"/><path d="M0.7 4L3.7 1H12.7L9.2 4Z" fill="#1a1ad8" stroke="#000" stroke-width="0.9" stroke-linejoin="round"/><path d="M9.2 4L12.7 1V9.3L9.2 12.5Z" fill="#0000c0" stroke="#000" stroke-width="0.9" stroke-linejoin="round"/></svg>
<div class="t" style="left:67.7px;top:225.7px;font-size:14px;letter-spacing:0.32px;color:#333;font-weight:normal">Face010</div>
<svg class="a" style="left:47px;top:244px" width="14" height="14" viewBox="0 0 14 14"><path d="M0.7 4H9.2V12.5H0.7Z" fill="#0000f5" stroke="#000" stroke-width="0.9"/><path d="M0.7 4L3.7 1H12.7L9.2 4Z" fill="#1a1ad8" stroke="#000" stroke-width="0.9" stroke-linejoin="round"/><path d="M9.2 4L12.7 1V9.3L9.2 12.5Z" fill="#0000c0" stroke="#000" stroke-width="0.9" stroke-linejoin="round"/></svg>
<div class="t" style="left:67.7px;top:244.7px;font-size:14px;letter-spacing:0.32px;color:#333;font-weight:normal">Face011</div>
<svg class="a" style="left:47px;top:263px" width="14" height="14" viewBox="0 0 14 14"><path d="M0.7 4H9.2V12.5H0.7Z" fill="#0000f5" stroke="#000" stroke-width="0.9"/><path d="M0.7 4L3.7 1H12.7L9.2 4Z" fill="#1a1ad8" stroke="#000" stroke-width="0.9" stroke-linejoin="round"/><path d="M9.2 4L12.7 1V9.3L9.2 12.5Z" fill="#0000c0" stroke="#000" stroke-width="0.9" stroke-linejoin="round"/></svg>
<div class="t" style="left:67.7px;top:263.7px;font-size:14px;letter-spacing:0.32px;color:#333;font-weight:normal">Face012</div>
<svg class="a" style="left:47px;top:282px" width="14" height="14" viewBox="0 0 14 14"><path d="M0.7 4H9.2V12.5H0.7Z" fill="#808080" stroke="#5a5a5a" stroke-width="0.9"/><path d="M0.7 4L3.7 1H12.7L9.2 4Z" fill="#8a8a8a" stroke="#5a5a5a" stroke-width="0.9" stroke-linejoin="round"/><path d="M9.2 4L12.7 1V9.3L9.2 12.5Z" fill="#6a6a6a" stroke="#5a5a5a" stroke-width="0.9" stroke-linejoin="round"/></svg>
<div class="t" style="left:67.7px;top:282.7px;font-size:14px;letter-spacing:0.32px;color:#a8a8a8;font-weight:normal">Face013</div>
<svg class="a" style="left:47px;top:301px" width="14" height="14" viewBox="0 0 14 14"><path d="M0.7 4H9.2V12.5H0.7Z" fill="#0000f5" stroke="#000" stroke-width="0.9"/><path d="M0.7 4L3.7 1H12.7L9.2 4Z" fill="#1a1ad8" stroke="#000" stroke-width="0.9" stroke-linejoin="round"/><path d="M9.2 4L12.7 1V9.3L9.2 12.5Z" fill="#0000c0" stroke="#000" stroke-width="0.9" stroke-linejoin="round"/></svg>
<div class="t" style="left:67.7px;top:301.7px;font-size:14px;letter-spacing:0.32px;color:#333;font-weight:normal">Face014</div>
<svg class="a" style="left:47px;top:320px" width="14" height="14" viewBox="0 0 14 14"><path d="M0.7 4H9.2V12.5H0.7Z" fill="#0000f5" stroke="#000" stroke-width="0.9"/><path d="M0.7 4L3.7 1H12.7L9.2 4Z" fill="#1a1ad8" stroke="#000" stroke-width="0.9" stroke-linejoin="round"/><path d="M9.2 4L12.7 1V9.3L9.2 12.5Z" fill="#0000c0" stroke="#000" stroke-width="0.9" stroke-linejoin="round"/></svg>
<div class="t" style="left:67.7px;top:320.7px;font-size:14px;letter-spacing:0.32px;color:#333;font-weight:normal">Face015</div>
<svg class="a" style="left:47px;top:339px" width="14" height="14" viewBox="0 0 14 14"><path d="M0.7 4H9.2V12.5H0.7Z" fill="#808080" stroke="#5a5a5a" stroke-width="0.9"/><path d="M0.7 4L3.7 1H12.7L9.2 4Z" fill="#8a8a8a" stroke="#5a5a5a" stroke-width="0.9" stroke-linejoin="round"/><path d="M9.2 4L12.7 1V9.3L9.2 12.5Z" fill="#6a6a6a" stroke="#5a5a5a" stroke-width="0.9" stroke-linejoin="round"/></svg>
<div class="t" style="left:67.7px;top:339.7px;font-size:14px;letter-spacing:0.32px;color:#a8a8a8;font-weight:normal">Face016</div>
<svg class="a" style="left:44px;top:356px" width="20" height="19" viewBox="0 0 20 19"><rect x="3" y="8" width="9.5" height="7.5" fill="none" stroke="#2525f0" stroke-width="1.3"/><circle cx="12.5" cy="6" r="4.8" fill="none" stroke="#2525f0" stroke-width="1.3"/></svg>
<div class="t" style="left:67.7px;top:358.7px;font-size:14px;letter-spacing:0.32px;color:#333;font-weight:normal">Line002</div>
<svg class="a" style="left:44px;top:375px" width="20" height="19" viewBox="0 0 20 19"><rect x="3" y="8" width="9.5" height="7.5" fill="none" stroke="#2525f0" stroke-width="1.3"/><circle cx="12.5" cy="6" r="4.8" fill="none" stroke="#2525f0" stroke-width="1.3"/></svg>
<div class="t" style="left:67.7px;top:377.7px;font-size:14px;letter-spacing:0.32px;color:#333;font-weight:bold">Line003</div>
<div class="a" style="left:65px;top:338px;width:135px;height:18px;border:1px dotted #888"></div>
<div class="a" style="left:261px;top:140px;width:13px;height:262px;border:1px solid #c7c4bf;border-radius:6px;background:#f0efed"></div>
<div class="a" style="left:262px;top:153px;width:11px;height:236px;border-radius:5px;background:#dad8d4;border:1px solid #cfccc7"></div>
<div class="a" style="left:262px;top:282px;width:11px;height:107px;border-radius:5px;background:linear-gradient(90deg,#f4f3f2,#fdfdfd,#eeedeb);border:1px solid #aeaba5"></div>
<svg class="a" style="left:263px;top:145px" width="9" height="6"><path d="M2 5L4.5 2L7 5Z" fill="#8a8782"/></svg>
<svg class="a" style="left:263px;top:392px" width="9" height="6"><path d="M1.5 1L4.5 4L7.5 1Z" fill="#9a9894"/></svg>
<div class="a" style="left:277px;top:398px;width:4px;height:1px;background:#c8c5c0"></div><div class="a" style="left:277px;top:401px;width:4px;height:1px;background:#c8c5c0"></div><div class="a" style="left:277px;top:404px;width:4px;height:1px;background:#c8c5c0"></div>
<div class="a" style="left:266px;top:331px;width:4px;height:6px;border-top:1px solid #999;border-bottom:1px solid #999"></div><div class="a" style="left:266px;top:333px;width:4px;height:1px;background:#999"></div>
<div class="a" style="left:136px;top:403px;width:1px;height:5px;background:#b8b5b0"></div><div class="a" style="left:138px;top:403px;width:1px;height:5px;background:#b8b5b0"></div><div class="a" style="left:140px;top:403px;width:1px;height:5px;background:#b8b5b0"></div>
<div class="a" style="left:2px;top:408px;width:272px;height:279px;border:1px solid #c3c0bb;border-radius:3px;background:#f3f2f1"></div>
<div class="a" style="left:4px;top:410px;width:268px;height:275px;border:1px solid #b9b6b0;background:#fff"></div>
<div class="a" style="left:5px;top:411px;width:266px;height:25px;background:linear-gradient(#fefefe,#efeeec);border-bottom:1px solid #b9b6b0"></div>
<div class="a" style="left:104px;top:411px;width:1px;height:24px;background:#c9c6c1"></div>
<div class="t" style="left:8.7px;top:416.5px;font-size:14px;letter-spacing:0.8px">Property</div>
<div class="t" style="left:109.3px;top:416.5px;font-size:14px;letter-spacing:0.5px">Value</div>
<svg class="a" style="left:0;top:684px" width="276" height="34"><path d="M53 4 L63 27 Q65 30 68 30 H86 Q89 30 90 27 L98 4" fill="#f2f1f0" stroke="#3a3a3a" stroke-width="1"/><path d="M2 2 L13 28 Q15 31 18 31 H36 Q39 31 40 28 L51 2" fill="#fff" stroke="#3a3a3a" stroke-width="1"/></svg>
<div class="t" style="left:10.8px;top:693.6px;font-size:14px;letter-spacing:0.73px">View</div>
<div class="t" style="left:59.3px;top:692.8px;font-size:14px;letter-spacing:0.37px">Data</div>
<svg width="989" height="601" viewBox="0 0 989 601" style="position:absolute;left:282px;top:84px;display:block">
<defs><linearGradient id="bg" x1="0" y1="0" x2="0" y2="1"><stop offset="0" stop-color="#333366"/><stop offset="1" stop-color="#9999aa"/></linearGradient><linearGradient id="mg" x1="0" y1="0" x2="0" y2="1"><stop offset="0" stop-color="#aaaaaa"/><stop offset="0.5" stop-color="#ffffff"/></linearGradient><mask id="mk" maskUnits="userSpaceOnUse" x="0" y="0" width="989" height="601"><rect width="989" height="601" fill="url(#mg)"/></mask></defs>
<rect width="989" height="601" fill="url(#bg)"/>
<polygon points="214,207.1 304.4,222.1 331.3,167 240.9,152.9" fill="#9e9e9e"/>
<polygon points="896,136.6 930.5,117.2 976.6,124.6 987,153.3 952.5,171.9 907.6,163.3" fill="#9e9e9e"/>
<g mask="url(#mk)"><path d="M267.15 -81.14L-1.41 466.22M255.43 -77.26L1159.39 82.51M276.18 -79.54L7.63 467.82M252.74 -71.79L1156.7 87.99M285.22 -77.94L16.66 469.42M250.06 -66.32L1154.02 93.47M294.26 -76.35L25.7 471.02M247.37 -60.84L1151.33 98.94M303.29 -74.75L34.73 472.62M244.69 -55.37L1148.64 104.42M312.33 -73.15L43.77 474.22M242 -49.9L1145.96 109.89M321.36 -71.56L52.81 475.82M239.32 -44.42L1143.27 115.37M330.4 -69.96L61.84 477.42M236.63 -38.95L1140.59 120.85M339.43 -68.36L70.88 479.02M233.95 -33.48L1137.9 126.32M357.51 -65.17L88.95 482.22M228.58 -22.53L1132.53 137.27M366.54 -63.57L97.98 483.82M225.89 -17.06L1129.85 142.75M375.58 -61.97L107.02 485.42M223.21 -11.58L1127.16 148.23M384.61 -60.38L116.05 487.02M220.52 -6.11L1124.47 153.7M393.65 -58.78L125.09 488.62M217.84 -0.64L1121.79 159.18M402.69 -57.18L134.13 490.22M215.15 4.83L1119.1 164.65M411.72 -55.58L143.16 491.82M212.46 10.31L1116.42 170.13M420.76 -53.99L152.2 493.42M209.78 15.78L1113.73 175.61M429.8 -52.39L161.24 495.02M207.09 21.25L1111.05 181.08M447.87 -49.2L179.31 498.22M201.72 32.2L1105.67 192.03M456.91 -47.6L188.35 499.82M199.04 37.67L1102.99 197.51M465.94 -46L197.38 501.42M196.35 43.15L1100.3 202.99M474.98 -44.4L206.42 503.02M193.67 48.62L1097.62 208.46M484.02 -42.81L215.46 504.62M190.98 54.09L1094.93 213.94M493.06 -41.21L224.49 506.22M188.3 59.57L1092.25 219.42M502.09 -39.61L233.53 507.82M185.61 65.04L1089.56 224.89M511.13 -38.01L242.57 509.42M182.93 70.51L1086.87 230.37M520.17 -36.42L251.6 511.02M180.24 75.99L1084.19 235.84M538.24 -33.22L269.68 514.23M174.87 86.93L1078.82 246.8M547.28 -31.62L278.72 515.83M172.18 92.41L1076.13 252.27M556.32 -30.03L287.76 517.43M169.5 97.88L1073.45 257.75M565.36 -28.43L296.79 519.03M166.81 103.35L1070.76 263.23M574.4 -26.83L305.83 520.63M164.13 108.83L1068.07 268.7M583.43 -25.23L314.87 522.23M161.44 114.3L1065.39 274.18M592.47 -23.64L323.91 523.83M158.76 119.77L1062.7 279.65M601.51 -22.04L332.94 525.43M156.07 125.25L1060.02 285.13M610.55 -20.44L341.98 527.03M153.39 130.72L1057.33 290.61M628.63 -17.25L360.06 530.23M148.01 141.67L1051.96 301.56M637.67 -15.65L369.1 531.83M145.33 147.14L1049.27 307.04M646.7 -14.05L378.14 533.43M142.64 152.61L1046.59 312.51M655.74 -12.45L387.18 535.03M139.96 158.09L1043.9 317.99M664.78 -10.86L396.21 536.63M137.27 163.56L1041.22 323.47M673.82 -9.26L405.25 538.23M134.59 169.03L1038.53 328.94M682.86 -7.66L414.29 539.83M131.9 174.51L1035.85 334.42M691.9 -6.06L423.33 541.43M129.22 179.98L1033.16 339.89M700.94 -4.47L432.37 543.03M126.53 185.45L1030.47 345.37M719.02 -1.27L450.45 546.24M121.16 196.4L1025.1 356.32M728.06 0.33L459.49 547.84M118.47 201.88L1022.42 361.8M737.1 1.93L468.53 549.44M115.79 207.35L1019.73 367.28M746.14 3.52L477.57 551.04M113.1 212.82L1017.04 372.75M755.18 5.12L486.61 552.64M110.42 218.3L1014.36 378.23M764.22 6.72L495.65 554.24M107.73 223.77L1011.67 383.71M773.26 8.32L504.69 555.84M105.05 229.24L1008.99 389.18M782.3 9.91L513.73 557.44M102.36 234.72L1006.3 394.66M791.34 11.51L522.77 559.04M99.67 240.19L1003.61 400.14M809.42 14.71L540.85 562.24M94.3 251.14L998.24 411.09M818.46 16.31L549.89 563.84M91.62 256.61L995.56 416.57M827.5 17.9L558.93 565.44M88.93 262.09L992.87 422.04M836.54 19.5L567.97 567.05M86.25 267.56L990.19 427.52M845.58 21.1L577.01 568.65M83.56 273.03L987.5 433M854.62 22.7L586.05 570.25M80.88 278.51L984.81 438.47M863.67 24.3L595.09 571.85M78.19 283.98L982.13 443.95M872.71 25.89L604.13 573.45M75.5 289.45L979.44 449.43M881.75 27.49L613.17 575.05M72.82 294.93L976.76 454.9M899.83 30.69L631.25 578.25M67.45 305.88L971.38 465.86M908.87 32.29L640.3 579.85M64.76 311.35L968.7 471.33M917.91 33.88L649.34 581.45M62.08 316.82L966.01 476.81M926.96 35.48L658.38 583.06M59.39 322.3L963.33 482.29M936 37.08L667.42 584.66M56.7 327.77L960.64 487.76M945.04 38.68L676.46 586.26M54.02 333.24L957.95 493.24M954.08 40.28L685.5 587.86M51.33 338.72L955.27 498.72M963.12 41.87L694.54 589.46M48.65 344.19L952.58 504.19M972.17 43.47L703.59 591.06M45.96 349.67L949.9 509.67M990.25 46.67L721.67 594.26M40.59 360.61L944.52 520.63M999.29 48.27L730.71 595.86M37.9 366.09L941.84 526.1M1008.34 49.87L739.76 597.47M35.22 371.56L939.15 531.58M1017.38 51.46L748.8 599.07M32.53 377.04L936.46 537.06M1026.42 53.06L757.84 600.67M29.85 382.51L933.78 542.53M1035.46 54.66L766.88 602.27M27.16 387.98L931.09 548.01M1044.51 56.26L775.93 603.87M24.48 393.46L928.41 553.49M1053.55 57.86L784.97 605.47M21.79 398.93L925.72 558.96M1062.59 59.46L794.01 607.07M19.1 404.41L923.03 564.44M1080.68 62.65L812.1 610.28M13.73 415.35L917.66 575.39M1089.72 64.25L821.14 611.88M11.05 420.83L914.98 580.87M1098.77 65.85L830.18 613.48M8.36 426.3L912.29 586.35M1107.81 67.45L839.23 615.08M5.67 431.78L909.6 591.83M1116.85 69.05L848.27 616.68M2.99 437.25L906.92 597.3M1125.9 70.64L857.31 618.28M0.3 442.72L904.23 602.78M1134.94 72.24L866.36 619.88M-2.38 448.2L901.55 608.26M1143.98 73.84L875.4 621.49M-5.07 453.67L898.86 613.73M1153.03 75.44L884.44 623.09M-7.75 459.15L896.17 619.21" stroke="#262640" stroke-opacity="0.26" stroke-width="1" fill="none"/><path d="M258.11 -82.73L-10.44 464.62M258.11 -82.73L1162.07 77.04M348.47 -66.76L79.91 480.62M231.26 -28L1135.22 131.8M438.83 -50.79L170.27 496.62M204.41 26.73L1108.36 186.56M529.21 -34.82L260.64 512.62M177.55 81.46L1081.5 241.32M619.59 -18.84L351.02 528.63M150.7 136.19L1054.65 296.08M709.98 -2.87L441.41 544.63M123.84 190.93L1027.79 350.85M800.38 13.11L531.81 560.64M96.99 245.66L1000.93 405.61M890.79 29.09L622.21 576.65M70.13 300.4L974.07 460.38M981.21 45.07L712.63 592.66M43.28 355.14L947.21 515.15M1071.64 61.05L803.05 608.67M16.42 409.88L920.35 569.92M1162.07 77.04L893.49 624.69M-10.44 464.62L893.49 624.69" stroke="#262638" stroke-opacity="0.68" stroke-width="1" fill="none"/></g>
<polygon points="214,207.1 304.4,222.1 331.3,167 240.9,152.9" fill="#9e9e9e" fill-opacity="0.35"/>
<polygon points="896,136.6 930.5,117.2 976.6,124.6 987,153.3 952.5,171.9 907.6,163.3" fill="#9e9e9e" fill-opacity="0.35"/>
<polygon points="240.5,77.5 331.3,92.9 331.3,167 240.9,152.9" fill="#ababab"/>
<polygon points="240.5,77.5 213.6,131.7 240.9,136.5" fill="#3d3d3d"/>
<polygon points="213.6,131.7 304.4,147.1 304.4,222.1 214,207.1" fill="#aaaaaa"/>
<path d="M240.5,77.5 L331.3,92.9 L304.4,147.1 L213.6,131.7 Z M240.5,77.5 L240.9,136.5 M213.6,131.7 L214,207.1 L304.4,222.1 L304.4,147.1 M331.3,92.9 L331.3,167 L304.4,222.1" stroke="#141414" stroke-width="1.8" fill="none" stroke-linejoin="round"/>
<polygon points="602.2,140.9 692,157 665.7,210.4 575.7,195.4" fill="#aba710"/>
<polygon points="575.7,195.4 665.7,210.4 666.2,285.4 575.7,270.4" fill="#d2cf0a"/>
<polygon points="665.7,210.4 692,157 693.3,232.5 666.2,285.4" fill="#4b4a0b"/>
<path d="M602.2,140.9 L692,157 L665.7,210.4 L575.7,195.4 Z M575.7,195.4 L575.7,270.4 L666.2,285.4 L665.7,210.4 M692,157 L693.3,232.5 L666.2,285.4" stroke="#141414" stroke-width="1.8" fill="none" stroke-linejoin="round"/>
<path d="M576.21 77 L574.86 79.35 L573.19 81.63 L571.19 83.81 L568.89 85.88 L566.3 87.82 L563.44 89.61 L560.33 91.25 L557 92.72 L553.48 94.01 L549.78 95.11 L545.94 96.01 L541.98 96.71 L537.94 97.19 L533.85 97.46 L529.74 97.51 L525.64 97.35 L521.58 96.97 L517.59 96.38 L513.7 95.58 L509.94 94.58 L506.35 93.38 L502.94 92 L499.75 90.44 L496.79 88.72 L494.1 86.85 L491.68 84.84 L489.57 82.71 L487.77 80.48 L486.3 78.16 L485.17 75.77 L484.38 73.33 L483.96 70.86 L483.89 68.37 L484.18 65.89 L484.83 63.43 L485.82 61.02 L487.17 58.66 L488.84 56.39 L490.84 54.21 L493.14 52.14 L495.73 50.2 L498.59 48.4 L501.7 46.76 L505.03 45.29 L508.55 44 L512.25 42.91 L516.09 42 L520.05 41.31 L524.09 40.83 L528.18 40.56 L532.29 40.5 L536.39 40.67 L540.45 41.05 L544.44 41.64 L548.33 42.44 L552.08 43.44 L555.68 44.64 L559.09 46.02 L562.28 47.58 L565.24 49.3 L567.93 51.17 L570.35 53.18 L572.46 55.3 L574.26 57.53 L575.73 59.85 L576.87 62.24 L577.65 64.68 L578.07 67.15 L578.14 69.64 L577.85 72.12 L577.2 74.58Z" fill="none" stroke="#141414" stroke-width="1.7" stroke-linejoin="round"/>
<path d="M576.21 1.5 L574.86 3.85 L573.19 6.13 L571.19 8.31 L568.89 10.38 L566.3 12.32 L563.44 14.11 L560.33 15.75 L557 17.22 L553.48 18.51 L549.78 19.61 L545.94 20.51 L541.98 21.21 L537.94 21.69 L533.85 21.96 L529.74 22.01 L525.64 21.85 L521.58 21.47 L517.59 20.88 L513.7 20.08 L509.94 19.08 L506.35 17.88 L502.94 16.5 L499.75 14.94 L496.79 13.22 L494.1 11.35 L491.68 9.34 L489.57 7.21 L487.77 4.98 L486.3 2.66 L485.17 0.27 L484.38 -2.17 L483.96 -4.64 L483.89 -7.13 L484.18 -9.61 L484.83 -12.07 L485.82 -14.48 L487.17 -16.84 L488.84 -19.11 L490.84 -21.29 L493.14 -23.36 L495.73 -25.3 L498.59 -27.1 L501.7 -28.74 L505.03 -30.21 L508.55 -31.5 L512.25 -32.59 L516.09 -33.5 L520.05 -34.19 L524.09 -34.67 L528.18 -34.94 L532.29 -35 L536.39 -34.83 L540.45 -34.45 L544.44 -33.86 L548.33 -33.06 L552.08 -32.06 L555.68 -30.86 L559.09 -29.48 L562.28 -27.92 L565.24 -26.2 L567.93 -24.33 L570.35 -22.32 L572.46 -20.2 L574.26 -17.97 L575.73 -15.65 L576.87 -13.26 L577.65 -10.82 L578.07 -8.35 L578.14 -5.86 L577.85 -3.38 L577.2 -0.92Z" fill="none" stroke="#141414" stroke-width="1.7" stroke-linejoin="round"/>
<path d="M577.2 0 L577.2 69.5" stroke="#141414" stroke-width="1.7"/>
<polygon points="930.1,42 976.2,49.4 976.2,124 952.3,120 930.5,117.2" fill="#b2b2b2"/>
<polygon points="976.2,49.4 986.6,78.1 986.6,78.1 976.4,83" fill="#333333"/>
<polygon points="896,61.5 930.1,42 930.5,117.2 907.6,129.2 907,87.1" fill="#9a9a9a"/>
<polygon points="896,61.5 907,87.1 907.6,163.3 896,136.2" fill="#343434"/>
<polygon points="986.6,78.1 952.1,96.7 952.5,171.3 987.2,152.2" fill="#9b9b9b"/>
<path d="M896,61.5 L930.1,42 L976.2,49.4 L986.6,78.1 L952.1,96.7 M896,61.5 L907,87.1 L907.6,163.3 L896,136.2 Z M930.1,42 L930.5,117.2 L907.6,129.2 M930.5,117.2 L952.3,120 M976.2,49.4 L976.4,83 M952.1,96.7 L952.5,171.3 L987.2,152.2 L986.6,78.1 M907.6,163.3 L952.5,171.3" stroke="#141414" stroke-width="1.8" fill="none" stroke-linejoin="round"/>
<path d="M159.5,316.6 L251.3,332.3 M341.3,348 L314.8,402.8 L405.1,419" stroke="#111" stroke-width="2.2" fill="none"/>
<path d="M958.5 571 L975.5 574" stroke="#a01818" stroke-width="1.6"/><path d="M973.5 571.5 L980.5 575 L973.0 576Z" fill="#a01818"/>
<path d="M958.5 571 L958.5 557" stroke="#1a1aa0" stroke-width="1.8"/><path d="M956.0 559 L958.5 551 L961.0 559Z" fill="#1a1aa0"/>
<path d="M959.0 570 L962.5 564" stroke="#1a9a1a" stroke-width="1.6"/><path d="M961.0 564 L964.0 561 L964.0 565Z" fill="#1a9a1a"/>
<text x="981.5" y="576" font-family="Liberation Sans" font-size="9.5" fill="#000">X</text>
<text x="959.5" y="553" font-family="Liberation Sans" font-size="9.5" fill="#000">Z</text>
<text x="964.5" y="563" font-family="Liberation Sans" font-size="9.5" fill="#000">Y</text>
</svg>
<div class="a" style="left:1271px;top:84px;width:1px;height:601px;background:#fbfbfa"></div>
<svg class="a" style="left:1282px;top:88px" width="8" height="5"><path d="M0.5 0V5M3.5 0V5M6.5 0V5" stroke="#d3d1cd" stroke-width="1"/></svg>
<div class="btn" style="left:1274px;top:96px;width:24px;height:24px;border-radius:5px;background:linear-gradient(#f6f5f4,#e3e1de)"></div>
<svg class="a" style="left:1277px;top:99px" width="18" height="18" viewBox="0 0 18 18"><path d="M6 8V5.5Q6 2.5 9 2.5Q12 2.5 12 5.5V8" fill="none" stroke="#0b3a2e" stroke-width="3.1" stroke-linecap="square"/><path d="M6 8V5.5Q6 2.5 9 2.5Q12 2.5 12 5.5V8" fill="none" stroke="#17a684" stroke-width="1.6" stroke-linecap="square"/><rect x="4" y="8" width="10" height="8.5" fill="#17a684" stroke="#0b3a2e" stroke-width="0.8"/><rect x="5" y="9" width="3" height="6.5" fill="#7fe0c4"/></svg>
<div class="btn" style="left:1274px;top:122px;width:24px;height:24px;border-radius:5px;background:linear-gradient(#f6f5f4,#e3e1de)"></div>
<svg class="a" style="left:1277px;top:125px" width="18" height="18" viewBox="0 0 18 18"><path d="M3 15L15 3" fill="none" stroke="#0b3a2e" stroke-width="3.1" stroke-linecap="square"/><path d="M3 15L15 3" fill="none" stroke="#17a684" stroke-width="1.6" stroke-linecap="square"/><ellipse cx="9" cy="9" rx="4" ry="2.6" transform="rotate(-45 9 9)" fill="#17a684" stroke="#0b3a2e" stroke-width="0.8"/></svg>
<div class="btn" style="left:1274px;top:148px;width:24px;height:24px;border-radius:5px;background:linear-gradient(#f6f5f4,#e3e1de)"></div>
<svg class="a" style="left:1277px;top:151px" width="18" height="18" viewBox="0 0 18 18"><path d="M9 3V14" fill="none" stroke="#0b3a2e" stroke-width="3.5" stroke-linecap="square"/><path d="M9 3V14" fill="none" stroke="#17a684" stroke-width="2" stroke-linecap="square"/><path d="M3 15H15" fill="none" stroke="#0b3a2e" stroke-width="3.5" stroke-linecap="square"/><path d="M3 15H15" fill="none" stroke="#17a684" stroke-width="2" stroke-linecap="square"/></svg>
<div class="btn" style="left:1274px;top:174px;width:24px;height:24px;border-radius:5px;background:linear-gradient(#f6f5f4,#e3e1de)"></div>
<svg class="a" style="left:1277px;top:177px" width="18" height="18" viewBox="0 0 18 18"><path d="M5.5 2.5V15.5M12.5 2.5V15.5M2.5 5.5H15.5M2.5 12.5H15.5" fill="none" stroke="#0b3a2e" stroke-width="3.7" stroke-linecap="square"/><path d="M5.5 2.5V15.5M12.5 2.5V15.5M2.5 5.5H15.5M2.5 12.5H15.5" fill="none" stroke="#17a684" stroke-width="2.2" stroke-linecap="square"/><rect x="6.6" y="6.6" width="4.8" height="4.8" fill="#f0efed"/></svg>
<div class="btn" style="left:1274px;top:200px;width:24px;height:24px;border-radius:5px;background:linear-gradient(#f6f5f4,#e3e1de)"></div>
<svg class="a" style="left:1277px;top:203px" width="18" height="18" viewBox="0 0 18 18"><path d="M4 4L14 14M14 4L4 14" fill="none" stroke="#0b3a2e" stroke-width="3.9" stroke-linecap="square"/><path d="M4 4L14 14M14 4L4 14" fill="none" stroke="#17a684" stroke-width="2.4" stroke-linecap="square"/></svg>
<div class="btn" style="left:1274px;top:226px;width:24px;height:24px;border-radius:5px;background:linear-gradient(#f6f5f4,#e3e1de)"></div>
<svg class="a" style="left:1277px;top:229px" width="18" height="18" viewBox="0 0 18 18"><path d="M5 3.5L16 9M2 8.5L13 14" fill="none" stroke="#0b3a2e" stroke-width="3.7" stroke-linecap="square"/><path d="M5 3.5L16 9M2 8.5L13 14" fill="none" stroke="#17a684" stroke-width="2.2" stroke-linecap="square"/></svg>
<div class="btn" style="left:1274px;top:252px;width:24px;height:24px;border-radius:5px;background:linear-gradient(#f6f5f4,#e3e1de)"></div>
<svg class="a" style="left:1277px;top:255px" width="18" height="18" viewBox="0 0 18 18"><path d="M5 13L15 4" fill="none" stroke="#0b3a2e" stroke-width="3.3" stroke-linecap="square"/><path d="M5 13L15 4" fill="none" stroke="#17a684" stroke-width="1.8" stroke-linecap="square"/><circle cx="4.7" cy="14" r="2.6" fill="#17a684" stroke="#0b3a2e" stroke-width="0.8"/></svg>
<div class="btn" style="left:1274px;top:278px;width:24px;height:24px;border-radius:5px;background:linear-gradient(#f6f5f4,#e3e1de)"></div>
<svg class="a" style="left:1277px;top:281px" width="18" height="18" viewBox="0 0 18 18"><circle cx="9" cy="9" r="4.6" fill="none" stroke="#0b3a2e" stroke-width="1.2"/><circle cx="9" cy="4" r="2.3" fill="#17a684" stroke="#0b3a2e" stroke-width="0.8"/><circle cx="9" cy="14" r="2.3" fill="#17a684" stroke="#0b3a2e" stroke-width="0.8"/><circle cx="4" cy="9" r="2.3" fill="#17a684" stroke="#0b3a2e" stroke-width="0.8"/><circle cx="14" cy="9" r="2.3" fill="#17a684" stroke="#0b3a2e" stroke-width="0.8"/></svg>
<div class="btn" style="left:1274px;top:304px;width:24px;height:24px;border-radius:5px;background:linear-gradient(#f6f5f4,#e3e1de)"></div>
<svg class="a" style="left:1277px;top:307px" width="18" height="18" viewBox="0 0 18 18"><circle cx="9" cy="9" r="6.5" fill="none" stroke="#0b3a2e" stroke-width="3"/><circle cx="9" cy="9" r="6.5" fill="none" stroke="#17a684" stroke-width="1.6"/><circle cx="9" cy="9" r="3.3" fill="none" stroke="#0b3a2e" stroke-width="2.2"/><circle cx="9" cy="9" r="3.3" fill="none" stroke="#17a684" stroke-width="0.9"/><circle cx="9" cy="9" r="1.3" fill="#17a684" stroke="#0b3a2e" stroke-width="0.8"/></svg>
<div class="btn" style="left:1274px;top:330px;width:24px;height:24px;border-radius:5px;background:linear-gradient(#f6f5f4,#e3e1de)"></div>
<svg class="a" style="left:1277px;top:333px" width="18" height="18" viewBox="0 0 18 18"><circle cx="3.5" cy="9" r="2.1" fill="#17a684" stroke="#0b3a2e" stroke-width="0.8"/><circle cx="9" cy="9" r="2.1" fill="#17a684" stroke="#0b3a2e" stroke-width="0.8"/><circle cx="14.5" cy="9" r="2.1" fill="#17a684" stroke="#0b3a2e" stroke-width="0.8"/></svg>
<div class="btn" style="left:1274px;top:356px;width:24px;height:24px;border-radius:5px;background:linear-gradient(#f6f5f4,#e3e1de)"></div>
<svg class="a" style="left:1277px;top:359px" width="18" height="18" viewBox="0 0 18 18"><path d="M3 8L11 13" fill="none" stroke="#0b3a2e" stroke-width="3.7" stroke-linecap="square"/><path d="M3 8L11 13" fill="none" stroke="#17a684" stroke-width="2.2" stroke-linecap="square"/><circle cx="14" cy="5" r="2.1" fill="#17a684" stroke="#0b3a2e" stroke-width="0.8"/></svg>
<div class="btn" style="left:1274px;top:382px;width:24px;height:24px;border-radius:5px;background:linear-gradient(#f6f5f4,#e3e1de)"></div>
<svg class="a" style="left:1277px;top:385px" width="18" height="18" viewBox="0 0 18 18"><path d="M9 3.5V14.5M3.5 9H14.5" fill="none" stroke="#0b3a2e" stroke-width="3.9" stroke-linecap="square"/><path d="M9 3.5V14.5M3.5 9H14.5" fill="none" stroke="#17a684" stroke-width="2.4" stroke-linecap="square"/></svg>
<div class="btn" style="left:1274px;top:408px;width:24px;height:24px;border-radius:5px;background:linear-gradient(#f6f5f4,#e3e1de)"></div>
<svg class="a" style="left:1277px;top:411px" width="18" height="18" viewBox="0 0 18 18"><path d="M6 5V13H13V5" fill="none" stroke="#0b3a2e" stroke-width="1.4"/><text x="7" y="5" font-family="Liberation Sans" font-size="5" font-weight="bold" fill="#0b3a2e">1.00</text><text x="5" y="15" font-family="Liberation Sans" font-size="5" font-weight="bold" fill="#0b3a2e" transform="rotate(-90 5 15)">1.00</text></svg>
<div class="btn" style="left:1274px;top:434px;width:24px;height:24px;border-radius:5px;background:linear-gradient(#f6f5f4,#e3e1de)"></div>
<svg class="a" style="left:1277px;top:437px" width="18" height="18" viewBox="0 0 18 18"><rect x="2.5" y="2.5" width="13" height="13" fill="#17a684" stroke="#0b3a2e" stroke-width="1"/><circle cx="6" cy="12" r="1.5" fill="none" stroke="#0b3a2e" stroke-width="0.9"/></svg>
<div class="a" style="left:282px;top:686px;width:225px;height:32px;border:1px solid #c9c6c1;border-top:none;border-radius:0 0 3px 3px;background:linear-gradient(#fdfdfd,#f7f6f5)"></div>
<div class="a" style="left:282px;top:685px;width:989px;height:1px;background:#bdbab5"></div>
<svg class="a" style="left:289px;top:693px" width="16" height="15" viewBox="0 0 16 15"><path d="M0.5 1H9V4H4V6H8V9H4V14H0.5Z" fill="#e8401e" stroke="#b52a10" stroke-width="0.6"/><g transform="translate(10.5 9)"><circle r="3.6" fill="#1a2fb8"/><path d="M0 -5.2V5.2M-5.2 0H5.2M-3.7 -3.7L3.7 3.7M3.7 -3.7L-3.7 3.7" stroke="#1a2fb8" stroke-width="1.8"/><circle r="1.5" fill="#fff"/></g></svg>
<div class="t" style="left:312px;top:694.6px;font-size:14px;letter-spacing:0.32px">F2-T27-ejemplo-work : 1</div>
<svg class="a" style="left:482px;top:695px" width="14" height="14"><path d="M2.5 2.5L11.5 11.5M11.5 2.5L2.5 11.5" stroke="#555" stroke-width="3.2" stroke-linecap="round"/></svg>
<div class="a" style="left:0;top:718px;width:1301px;height:1px;background:#d4d1cc"></div>
<div class="a" style="left:0;top:719px;width:1301px;height:1px;background:#fbfbfb"></div>
<div class="t" style="left:6.5px;top:725.7px;font-size:14px;letter-spacing:0.81px">Valid</div>
<div class="t" style="left:1175.3px;top:727.1px;font-size:14px;letter-spacing:0.28px">104.83 x 63.70 mm</div>
</body></html>
